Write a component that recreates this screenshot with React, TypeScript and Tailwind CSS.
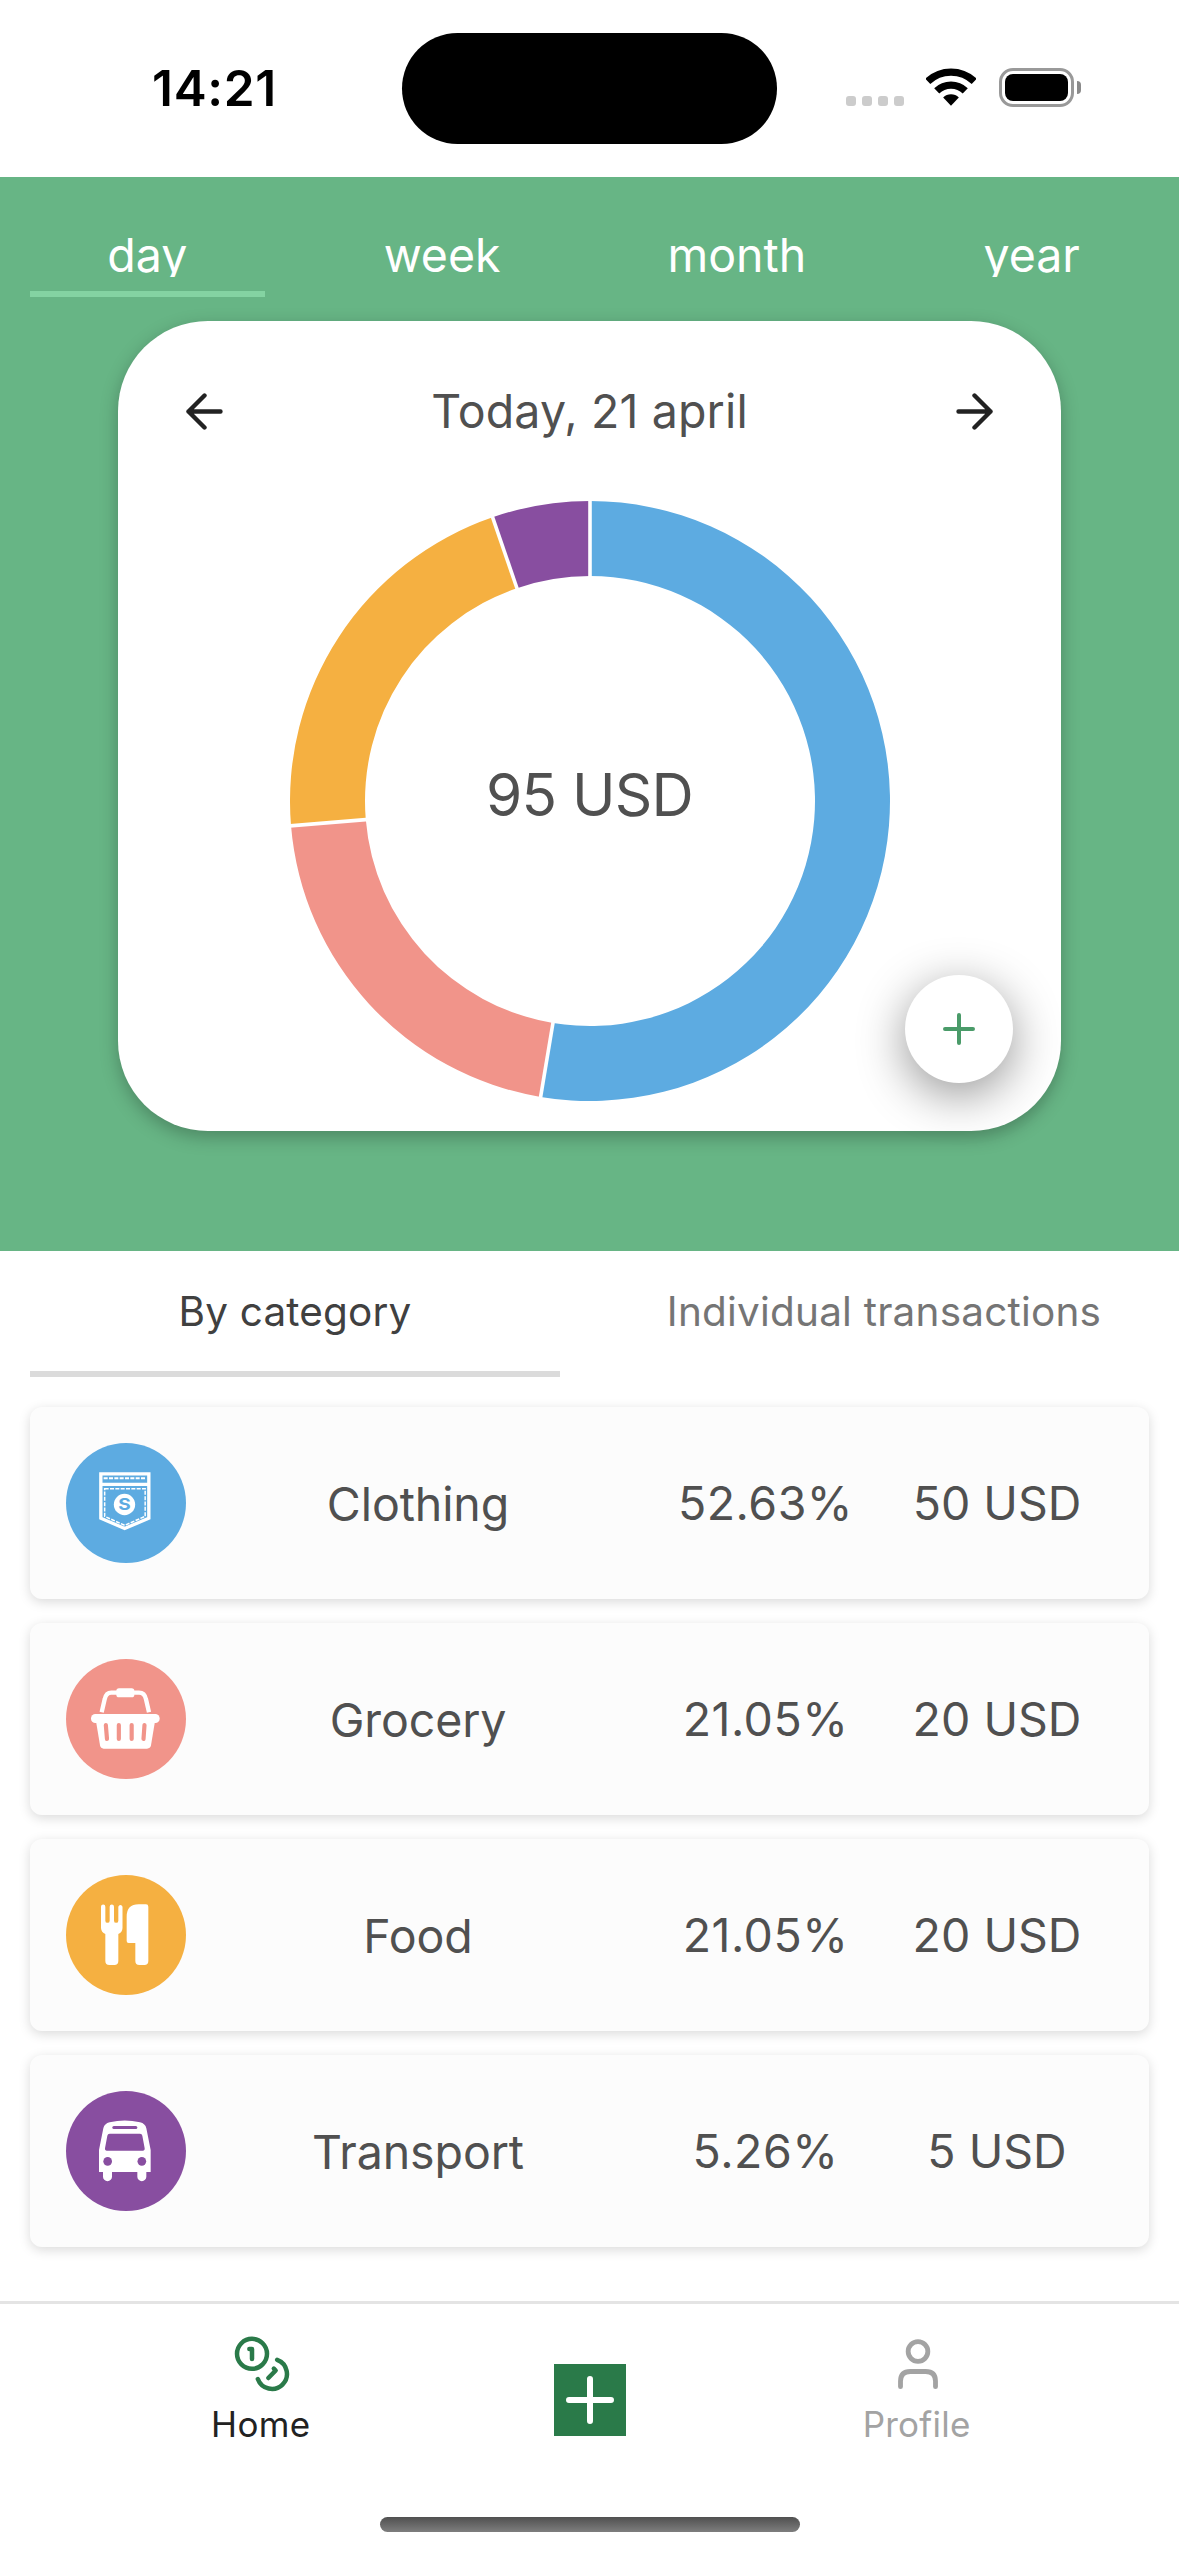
import React from "react";

type Category = {
  name: string;
  percent: string;
  amount: string;
  circle: string;
  icon: React.ReactNode;
};

/* ---------- status bar ---------- */

function WifiIcon() {
  return (
    <svg className="w-[50px] h-[38px]" viewBox="319.5 85 150 114" fill="none" stroke="#000" strokeWidth="22">
      <path d="M324.8 125.3A101 101 0 0 1 464.2 125.3" />
      <path d="M351.7 153.4A62 62 0 0 1 437.3 153.4" />
      <path d="M394.5 198L371 173.500A34 34 0 0 1 418 173.500Z" fill="#000" stroke="none" />
    </svg>
  );
}

function StatusBar() {
  return (
    <header className="flex h-[177px] w-full bg-white">
      <div className="flex h-[175px] w-[402px] items-center pl-[152px]">
        <span className="text-[49.5px] leading-[60px] font-semibold tracking-[0.7px] text-black">14:21</span>
      </div>
      <div className="mt-[33px] h-[111px] w-[375px] rounded-full bg-black" />
      <div className="mt-[68px] ml-[69px] flex h-[39px] items-start">
        <div className="mt-[28px] flex gap-[6px]">
          {[0, 1, 2, 3].map((dot) => (
            <span key={dot} className="size-[10px] rounded-[3px] bg-[#cccccc]" />
          ))}
        </div>
        <div className="ml-[22px]">
          <WifiIcon />
        </div>
        <div className="ml-[23px] flex h-[39px] w-[75px] rounded-[14px] border-[3px] border-[#999999] p-[3px]">
          <div className="flex-1 rounded-[8px] bg-black" />
        </div>
        <div className="mt-[13px] ml-[3px] h-[13px] w-[4px] rounded-r-full bg-[#8a8a8a]" />
      </div>
    </header>
  );
}

/* ---------- donut chart ---------- */

const slices = [
  { value: 50, color: "#5dabe1" },
  { value: 20, color: "#f1948a" },
  { value: 20, color: "#f5b041" },
  { value: 5, color: "#884ea0" },
];

function point(radius: number, fraction: number) {
  const angle = fraction * Math.PI * 2;
  return `${300 + radius * Math.sin(angle)} ${300 - radius * Math.cos(angle)}`;
}

function Donut() {
  const total = slices.reduce((sum, s) => sum + s.value, 0);
  let start = 0;
  const arcs = slices.map((s) => {
    const from = start / total;
    start += s.value;
    return { color: s.color, from, to: start / total };
  });
  return (
    <svg className="col-start-1 row-start-1 size-[600px]" viewBox="0 0 600 600">
      {arcs.map((a) => (
        <path
          key={a.color}
          fill={a.color}
          d={`M${point(300, a.from)}A300 300 0 ${a.to - a.from > 0.5 ? 1 : 0} 1 ${point(300, a.to)}L${point(225, a.to)}A225 225 0 ${a.to - a.from > 0.5 ? 1 : 0} 0 ${point(225, a.from)}Z`}
        />
      ))}
      {arcs.map((a) => (
        <path key={a.color} stroke="#fff" strokeWidth="3.6" d={`M${point(222, a.from)}L${point(303, a.from)}`} />
      ))}
    </svg>
  );
}

/* ---------- overview ---------- */

function Arrow({ flip }: { flip?: boolean }) {
  return (
    <svg
      className={flip ? "size-[37px] rotate-180" : "size-[37px]"}
      viewBox="0 0 37 37"
      fill="none"
      stroke="#222222"
      strokeWidth="4.4"
      strokeLinecap="round"
      strokeLinejoin="round"
    >
      <path d="M34.500 18.500H2.500M18.500 2.500L2.500 18.500L18.500 34.500" />
    </svg>
  );
}

function PeriodTab({ label, active }: { label: string; active?: boolean }) {
  return (
    <button className="flex flex-1 flex-col px-[30px]">
      <span className="h-[46px] w-full overflow-hidden text-center text-[46.5px] leading-[48px] text-white">
        {label}
      </span>
      <span className={active ? "mt-[14px] h-[6px] w-full bg-[#84d3a2]" : "mt-[14px] h-[6px] w-full"} />
    </button>
  );
}

function Overview() {
  return (
    <section className="flex h-[1074px] flex-col items-center bg-[#67b585] pt-[54px]">
      <nav className="flex w-full">
        <PeriodTab label="day" active />
        <PeriodTab label="week" />
        <PeriodTab label="month" />
        <PeriodTab label="year" />
      </nav>
      <div className="relative mt-[24px] flex h-[810px] w-[943px] flex-col items-center rounded-[90px] bg-white pt-[60px] shadow-[0_6px_18px_rgba(0,0,0,0.26)]">
        <div className="flex h-[60px] w-full items-center justify-between px-[68px]">
          <Arrow />
          <span className="text-[46.5px] leading-[60px] tracking-[0.15px] text-[#505050]">Today, 21 april</span>
          <Arrow flip />
        </div>
        <div className="mt-[60px] grid size-[600px] place-items-center">
          <Donut />
          <span className="z-10 col-start-1 row-start-1 mb-[12px] text-[58.500px] leading-[72px] tracking-[-0.8px] text-[#505050]">
            95 USD
          </span>
        </div>
        <button className="absolute right-[48px] bottom-[48px] flex size-[108px] items-center justify-center rounded-full bg-white shadow-[0_12px_48px_rgba(0,0,0,0.42)]">
          <svg className="size-[32px]" viewBox="0 0 32 32" stroke="#4a9b69" strokeWidth="4" strokeLinecap="round">
            <path d="M16 2V30M2 16H30" />
          </svg>
        </button>
      </div>
    </section>
  );
}

/* ---------- category icons ---------- */

function PocketIcon() {
  return (
    <svg className="size-[120px]" viewBox="78 69 360 360" fill="none" stroke="#fff">
      <path d="M182.500 161.500H326.500V294.500L254 325.500L182.500 294.500Z" strokeWidth="10" />
      <path d="M182 193H327" strokeWidth="10" />
      <path d="M191 174.500H319" strokeWidth="6" strokeDasharray="12 4" />
      <path d="M194 206H315.500V289L254 316L194 289Z" strokeWidth="4.500" strokeDasharray="12 4" />
      <circle cx="253.500" cy="253.500" r="32" fill="#fff" stroke="none" />
      <text
        transform="translate(253.5 270) scale(1.24 1)"
        textAnchor="middle"
        fontSize="46"
        fontWeight="700"
        fill="#5dabe1"
        stroke="none"
      >
        S
      </text>
    </svg>
  );
}

function BasketIcon() {
  return (
    <svg className="size-[120px]" viewBox="78 57 360 360" fill="none">
      <path d="M185 217L194 178Q198 158 214 158H297Q314 158 318 178L327 217" stroke="#fff" strokeWidth="13" />
      <rect x="229" y="145" width="54" height="27" rx="8" fill="#fff" />
      <rect x="153" y="222" width="206" height="27" rx="13" fill="#fff" />
      <path d="M168 244H345L333 316Q331 326 321 326H191Q182 326 180 316Z" fill="#fff" />
      <path
        d="M197.500 255L201 297M236.500 255V297M275 255V297M313.500 255L310.500 297"
        stroke="#f1948a"
        strokeWidth="12.500"
        strokeLinecap="round"
      />
    </svg>
  );
}

function CutleryIcon() {
  return (
    <svg className="size-[120px]" viewBox="78 75 360 360" fill="#fff">
      <path d="M183 170A6.500 6.500 0 0 1 196 170V212A6.500 6.500 0 0 0 209 212V170A6.500 6.500 0 0 1 222 170V212A6.500 6.500 0 0 0 235 212V170A6.500 6.500 0 0 1 247.500 170V234Q247 247 235 252V333Q235 345 223 345H208Q196 345 196 333V252Q184 247 183 234Z" />
      <path d="M260 273V200Q260 163 296 163H318Q325 163 325 170V333Q325 345 313 345H298Q286 345 286 333V279H266Q260 279 260 273Z" />
    </svg>
  );
}

function BusIcon() {
  return (
    <svg className="size-[120px]" viewBox="78 63 360 360" fill="#fff">
      <path d="M177 306V240L190 175Q193 161 209 157Q254 146 300 157Q316 161 319 175L332 240V306H319V320A13.500 13.500 0 0 1 292 320V306H216V320A13.500 13.500 0 0 1 189 320V306Z" />
      <g fill="#884ea0">
        <rect x="217" y="168" width="75" height="9" rx="4.500" />
        <path d="M209 191H300Q306 191 307 197L314 235Q315 242 308 242H201Q194 242 195 235L202 197Q203 191 209 191Z" />
        <circle cx="203" cy="274" r="13" />
        <circle cx="305.500" cy="274" r="13" />
      </g>
    </svg>
  );
}

/* ---------- category list ---------- */

const categories: Category[] = [
  { name: "Clothing", percent: "52.63%", amount: "50 USD", circle: "bg-[#5dabe1]", icon: <PocketIcon /> },
  { name: "Grocery", percent: "21.05%", amount: "20 USD", circle: "bg-[#f1948a]", icon: <BasketIcon /> },
  { name: "Food", percent: "21.05%", amount: "20 USD", circle: "bg-[#f5b041]", icon: <CutleryIcon /> },
  { name: "Transport", percent: "5.26%", amount: "5 USD", circle: "bg-[#884ea0]", icon: <BusIcon /> },
];

function CategoryRow({ item }: { item: Category }) {
  return (
    <li className="flex h-[192px] items-center rounded-[12px] bg-[#fcfcfc] px-[36px] text-[46.5px] leading-[60px] text-[#505050] shadow-[0_3px_12px_rgba(0,0,0,0.15)]">
      <div className={`size-[120px] shrink-0 rounded-full ${item.circle}`}>{item.icon}</div>
      <span className="w-[464px] pt-[2px] text-center tracking-[-0.1px]">{item.name}</span>
      <span className="w-[231px] text-center tracking-[0.5px]">{item.percent}</span>
      <span className="w-[232px] text-center">{item.amount}</span>
    </li>
  );
}

function Breakdown() {
  return (
    <section className="flex flex-1 flex-col px-[30px]">
      <div className="flex gap-[59px] text-[40.5px] leading-[60px]">
        <button className="h-[126px] w-[530px] border-b-[6px] border-[#dbdbdb] pt-[2px] tracking-[0.15px] text-[#404040]">
          By category
        </button>
        <button className="h-[126px] w-[530px] border-b-[6px] border-transparent pt-[2px] tracking-[0.2px] text-[#757575]">
          Individual transactions
        </button>
      </div>
      <ul className="mt-[30px] flex flex-col gap-[24px]">
        {categories.map((c) => (
          <CategoryRow key={c.name} item={c} />
        ))}
      </ul>
    </section>
  );
}

/* ---------- bottom navigation ---------- */

function CoinsIcon() {
  return (
    <svg
      className="size-[56px]"
      viewBox="162 138 168 168"
      fill="none"
      stroke="#2a7a49"
      strokeWidth="13.500"
      strokeLinecap="round"
      strokeLinejoin="round"
    >
      <circle cx="216" cy="191.500" r="45" />
      <path d="M291.500 209.500A45 45 0 1 1 233.500 267" />
      <path d="M208 177H216V207" />
      <path d="M281.500 236L287 241.500L265 264" />
    </svg>
  );
}

function ProfileIcon() {
  return (
    <svg
      className="ml-[2px] size-[56px]"
      viewBox="630 138 168 168"
      fill="none"
      stroke="#a3a3a3"
      strokeWidth="14.500"
      strokeLinecap="round"
    >
      <circle cx="714" cy="184.500" r="29.500" />
      <path d="M661.500 290V274Q661.500 244.500 691 244.500H737Q766.500 244.500 766.500 274V290" />
    </svg>
  );
}

function BottomNav() {
  return (
    <footer className="flex h-[255px] flex-col items-center border-t-[3px] border-[#e4e4e4] bg-white">
      <nav className="flex h-[213px] w-[983px] items-start">
        <button className="flex flex-1 flex-col items-center pt-[32px]">
          <CoinsIcon />
          <span className="mt-[8px] mr-[2px] text-[35px] leading-[48px] tracking-[0.4px] text-[#222222]">Home</span>
        </button>
        <button className="flex flex-1 flex-col items-center pt-[60px]">
          <span className="flex size-[72px] items-center justify-center bg-[#2a7a49]">
            <svg className="size-[48px]" viewBox="0 0 48 48" stroke="#fff" strokeWidth="6" strokeLinecap="round">
              <path d="M24 3V45M3 24H45" />
            </svg>
          </span>
        </button>
        <button className="flex flex-1 flex-col items-center pt-[32px]">
          <ProfileIcon />
          <span className="mt-[8px] mr-[1px] text-[35px] leading-[48px] tracking-[0.25px] text-[#a3a3a3]">Profile</span>
        </button>
      </nav>
      <div className="h-[15px] w-[420px] shrink-0 rounded-full bg-linear-to-b from-[#505050] to-[#7e7e7e]" />
    </footer>
  );
}

export default function App() {
  return (
    <div className="flex h-[2556px] w-[1179px] flex-col overflow-hidden bg-white font-['Inter',sans-serif] font-[380]">
      <StatusBar />
      <Overview />
      <Breakdown />
      <BottomNav />
    </div>
  );
}
